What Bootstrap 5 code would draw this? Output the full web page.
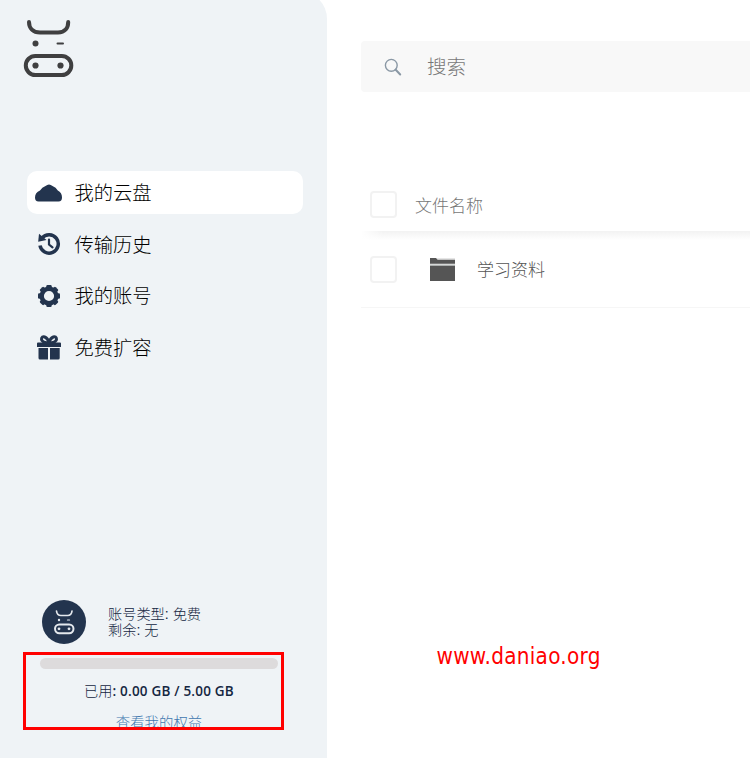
<!DOCTYPE html>
<html lang="zh-CN">
<head>
<meta charset="utf-8">
<meta name="viewport" content="width=device-width, initial-scale=1">
<title>我的云盘</title>
<link href="https://cdn.jsdelivr.net/npm/bootstrap@5.3.0/dist/css/bootstrap.min.css" rel="stylesheet">
<style>
body{font-family:"Liberation Sans","Noto Sans CJK SC",sans-serif;font-weight:300;width:750px;height:758px}
svg{display:block;flex:none}
.side{width:327px;background:#eff3f6;border-top-right-radius:28px;margin-top:-9px;padding:28px 24px 0 23px}
.menu{margin:94px 0 0 4px;gap:8.7px}
.menu .nav-link{height:43px;padding:0 0 0 8px;color:#000;font-size:19.3px;line-height:43px;border-radius:10px}
.menu .nav-link.active{background:#fff}
.menu svg{margin-right:12px}
.menu span{padding-top:2px;margin-left:-.5px}
.acct-text{font-size:14.2px;line-height:16px;color:#142641;margin-left:22px}
.profile{margin:231px 0 0 19px}
.usage{width:261px;height:78px;margin-top:8px;border:3px solid #f00;overflow:hidden;padding:3px 3px 0 14px}
.usage .progress{height:11px;width:238px;background:#dddbdc;border-radius:6px}
.used{font-size:14.2px;line-height:20px;margin-top:12px;color:#142641;width:238px}
.used b{font:600 13.5px/20px "Open Sans",sans-serif;letter-spacing:.2px}
.perk{font-size:14.4px;line-height:20px;margin-top:12px;color:#3f77af;width:238px}
.main{padding:41px 0 0 34px}
.search{height:51px;background:#f8f8f8;border-radius:4px 0 0 4px;padding-left:23px;color:#777;font-size:19.5px}
.search span{margin-left:25px;padding-top:2px}
.headrow{height:54px;margin-top:85px;padding-left:9px;font-size:17px;color:#777}
.headrow span{margin-left:18px;padding-top:5px}
.fade-line{height:9px;background:linear-gradient(90deg,#fff 0,transparent 22px),linear-gradient(#f2f2f2,#fff)}
.filerow{height:68px;padding:0 0 8px 9px;font-size:17px;color:#555;border-bottom:1px solid #f6f6f6}
.filerow svg{margin:0 14px 0 24px}
.filerow span{padding-top:2px}
.form-check-input.pick{width:27px;height:27px;border:2px solid #f2f2f2;border-radius:4px;margin:0;flex:none}
.site{left:436.5px;top:641px;color:#f00;font:22.3px/30px "DejaVu Sans Condensed","DejaVu Sans",sans-serif;font-stretch:condensed;letter-spacing:.28px;white-space:nowrap}
</style>
<script src="https://cdn.jsdelivr.net/npm/bootstrap@5.3.0/dist/js/bootstrap.bundle.min.js"></script>
</head>
<body class="bg-white overflow-hidden position-relative">
<div class="d-flex h-100">
  <aside class="side d-flex flex-column flex-shrink-0">
    <svg width="52" height="58" viewBox="0 0 52 58" fill="none" stroke="#3f3f40" stroke-width="4" stroke-linecap="round"><path d="M6 3C6 9 10 13.500 17 13.500H35C42 13.500 45.200 9 45.200 3"/><rect x="2.800" y="37" width="45.500" height="19" rx="9.500"/><path d="M34.500 24.500H40" stroke-width="2"/><g fill="#3f3f40" stroke="none"><circle cx="12.500" cy="24.500" r="3"/><circle cx="12.500" cy="46.500" r="3.100"/><circle cx="37.500" cy="46.500" r="3.100"/></g></svg>
    <nav class="menu nav flex-column">
      <a class="nav-link active d-flex align-items-center"><svg width="28" height="28" viewBox="0 0 28 28" fill="#23344e"><path d="M3.500 22.500Q0 22.500 0 18.500Q0 13.500 5 11.500Q7 8 10.500 7Q14 4 17.500 7Q21 8 22.800 11.500Q27 13.500 27 18.500Q27 22.500 23.500 22.500Z"/></svg><span>我的云盘</span></a>
      <a class="nav-link d-flex align-items-center"><svg width="28" height="28" viewBox="0 0 28 28" fill="none" stroke="#23344e"><path d="M7 8A9.200 9.200 0 1 1 5 15.500" stroke-width="3.500"/><path d="M4 3.700L3.200 11.800L11.500 10Z" fill="#23344e" stroke="none"/><path d="M14 9.500V14.500L17.500 17.300" stroke-width="2.200" stroke-linecap="round"/></svg><span>传输历史</span></a>
      <a class="nav-link d-flex align-items-center"><svg width="28" height="28" viewBox="0 0 28 28"><circle cx="14" cy="14" r="7.300" fill="none" stroke="#23344e" stroke-width="4.400"/><g fill="#23344e"><rect id="tooth" x="11.300" y="3" width="5.400" height="4" rx="1.200"/><use href="#tooth" transform="rotate(45 14 14)"/><use href="#tooth" transform="rotate(90 14 14)"/><use href="#tooth" transform="rotate(135 14 14)"/><use href="#tooth" transform="rotate(180 14 14)"/><use href="#tooth" transform="rotate(225 14 14)"/><use href="#tooth" transform="rotate(270 14 14)"/><use href="#tooth" transform="rotate(315 14 14)"/></g></svg><span>我的账号</span></a>
      <a class="nav-link d-flex align-items-center"><svg width="28" height="28" viewBox="0 0 28 28" fill="#23344e"><path d="M3 8.500H25Q26 8.500 26 9.500V13H2V9.500Q2 8.500 3 8.500ZM3.500 14H13V25.500H5Q3.500 25.500 3.500 24ZM15 14H24.700V24Q24.700 25.500 23.200 25.500H15Z"/><path d="M14 9C12.500 2.200 6.500 1 6.500 5.300Q6.500 8.500 14 9C15.500 2.200 21.500 1 21.500 5.300Q21.500 8.500 14 9" fill="none" stroke="#23344e" stroke-width="3"/></svg><span>免费扩容</span></a>
    </nav>
    <div class="profile d-flex align-items-center">
      <svg width="44" height="44" viewBox="0 0 44 44"><circle cx="22" cy="22" r="22" fill="#23344e"/><g fill="none" stroke="#e4e8ed" stroke-width="1.700" stroke-linecap="round"><path d="M14.500 11Q15 15.500 19 15.500H25.500Q29.500 15.500 30 11"/><rect x="13" y="24.500" width="18.500" height="8.700" rx="4.350" stroke-width="2"/><path d="M25.500 20H27.500" stroke-width="1.200"/></g><g fill="#e4e8ed"><circle cx="17" cy="20" r="1.200"/><circle cx="17" cy="28.800" r="1.400"/><circle cx="27" cy="28.800" r="1.400"/></g></svg>
      <div class="acct-text">账号类型: 免费<br>剩余: 无</div>
    </div>
    <div class="usage flex-shrink-0">
      <div class="progress"></div>
      <div class="used text-center text-nowrap">已用<b>: 0.00 GB / 5.00 GB</b></div>
      <div class="perk text-center">查看我的权益</div>
    </div>
  </aside>
  <main class="main flex-grow-1">
    <div class="search d-flex align-items-center"><svg width="18" height="18" viewBox="0 0 18 18" fill="none" stroke="#8a98a5" stroke-linecap="round"><circle cx="7.300" cy="7.300" r="5.900" stroke-width="1.400"/><path d="M11.700 11.700L16.200 16.500" stroke-width="2"/></svg><span>搜索</span></div>
    <div class="headrow d-flex align-items-center"><input class="form-check-input pick" type="checkbox" aria-label="全选"><span>文件名称</span></div>
    <div class="fade-line"></div>
    <div class="filerow d-flex align-items-center"><input class="form-check-input pick" type="checkbox" aria-label="选择"><svg width="42" height="23" viewBox="-9 0 42 23"><path d="M0 0H6L8 2H25V23H0Z" fill="#555"/><path d="M7 1.200H25" stroke="#aaa" stroke-width="1"/><path d="M0 6.700H25" stroke="#d5d8d7" stroke-width="2"/></svg><span>学习资料</span></div>
  </main>
</div>
<div class="site position-absolute">www.daniao.org</div>
</body>
</html>
